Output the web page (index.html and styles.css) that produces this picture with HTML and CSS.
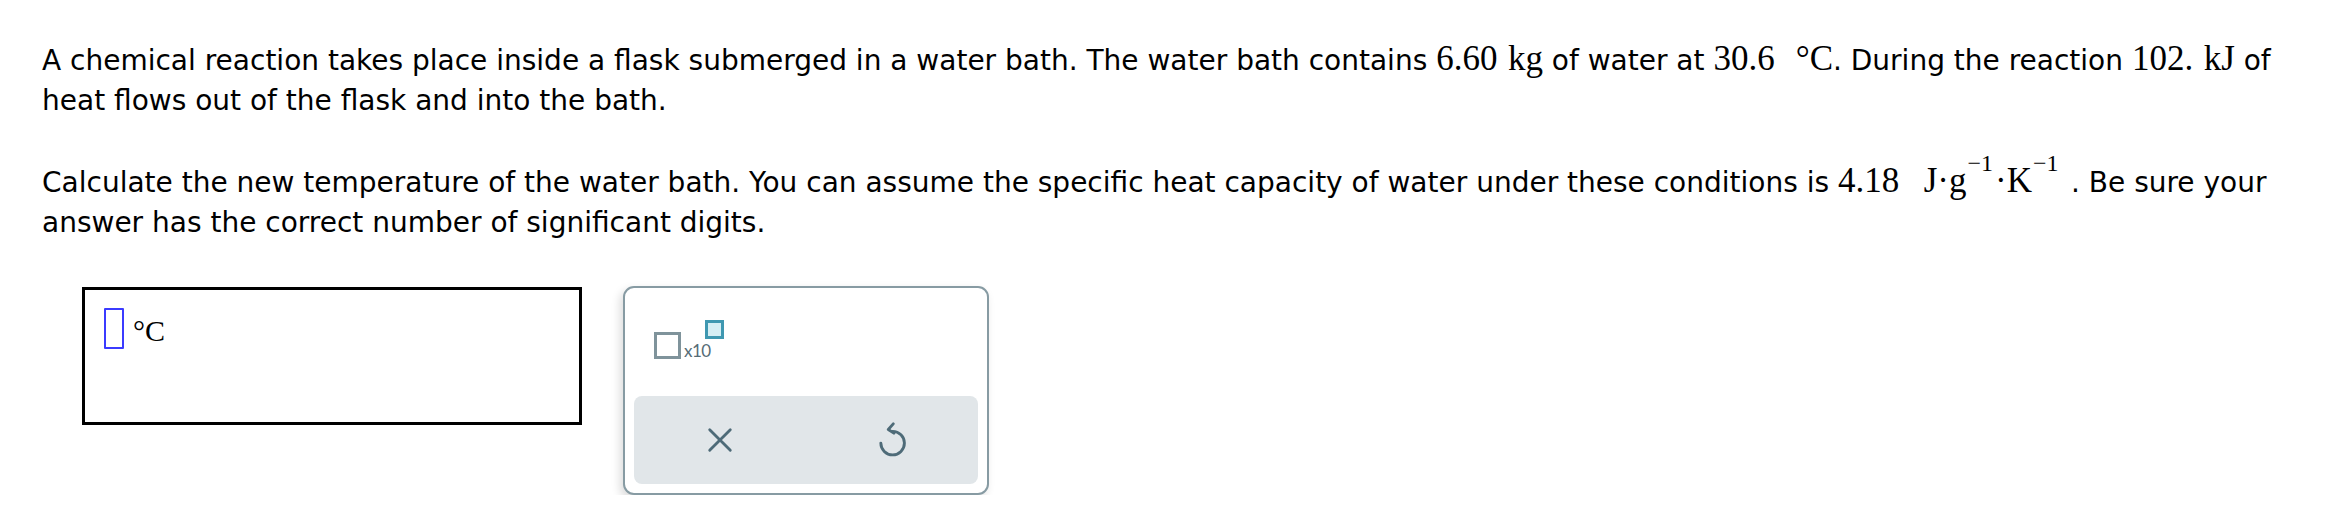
FILE: index.html
```html
<!DOCTYPE html>
<html lang="en">
<head>
<meta charset="utf-8">
<title>Water bath temperature</title>
<link rel="stylesheet" href="styles.css">
</head>
<body>
<div class="question">
  <p class="para">A chemical reaction takes place inside a flask submerged in a water bath. The water bath contains <span class="m">6.60<span class="u">kg</span></span> of water at <span class="m">30.6<span class="u deg">°C</span></span>. During the reaction <span class="m">102.<span class="u">kJ</span></span> of heat flows out of the flask and into the bath.</p>
  <p class="para">Calculate the new temperature of the water bath. You can assume the specific heat capacity of water under these conditions is <span class="m">4.18<span class="u wide">J·g<span class="sup">−1</span>·K<span class="sup">−1</span></span></span>. Be sure your answer has the correct number of significant digits.</p>
</div>
<div class="answer-row">
  <div class="answer-box">
    <span class="slot"></span>
    <span class="unit">°C</span>
  </div>
  <div class="keypad">
    <div class="keys-top">
      <div class="sci">
        <span class="sci-base"></span>
        <span class="sci-x">x10</span>
        <span class="sci-exp"></span>
      </div>
    </div>
    <div class="actions">
      <div class="action">
        <svg width="26" height="26" viewBox="0 0 24 24" fill="none" stroke="#4e6b78" stroke-width="2.6" stroke-linecap="round">
          <path d="M2.5 2.5 L21.5 21.5 M21.5 2.5 L2.5 21.5"/>
        </svg>
      </div>
      <div class="action">
        <svg width="30" height="36" viewBox="0 0 24 29" fill="none" stroke="#4e6b78" stroke-width="2.3" stroke-linecap="round" stroke-linejoin="round">
          <path d="M12.5 7.5 A9.5 9.5 0 1 1 3 17"/>
          <path d="M13 1.5 L9 6 L13.5 9"/>
        </svg>
      </div>
    </div>
  </div>
</div>
</body>
</html>
```
FILE: styles.css
```css
html, body {
  margin: 0;
  padding: 0;
  background: #ffffff;
}
body {
  padding: 41px 20px 0 42px;
  font-family: "DejaVu Sans", Verdana, sans-serif;
  font-size: 28px;
  line-height: 40px;
  color: #000;
}
.para {
  margin: 0;
}
.para + .para {
  margin-top: 42px;
}
.m {
  font-family: "Liberation Serif", "Times New Roman", serif;
  font-size: 35px;
  line-height: 0;
}
.u {
  margin-left: 0.3em;
}
.u.deg {
  margin-left: 0.6em;
}
.u.wide {
  margin-left: 0.7em;
  margin-right: 0.3em;
}
.sup {
  font-size: 24px;
  line-height: 0;
  vertical-align: 21px;
  margin: 0 2px 0 1px;
}
.answer-row {
  display: flex;
  align-items: flex-start;
  margin-top: 44px;
  margin-left: 40px;
}
.answer-box {
  box-sizing: border-box;
  width: 500px;
  height: 138px;
  border: 3px solid #000;
  padding: 18px 0 0 19px;
  display: flex;
  align-items: flex-start;
}
.slot {
  box-sizing: border-box;
  width: 20px;
  height: 41px;
  border: 2px solid #3b3bff;
  border-radius: 1px;
}
.unit {
  font-family: "Liberation Serif", "Times New Roman", serif;
  font-size: 30px;
  line-height: 31px;
  margin: 7px 0 0 9px;
}
.keypad {
  box-sizing: border-box;
  width: 366px;
  height: 209px;
  margin-left: 41px;
  margin-top: -1px;
  border: 2px solid #879ba3;
  border-radius: 11px;
  background: #fff;
  box-shadow: -3px 4px 10px rgba(0, 0, 0, 0.14);
  padding: 9px;
  display: flex;
  flex-direction: column;
}
.keys-top {
  height: 99px;
  padding: 23px 0 0 20px;
  box-sizing: border-box;
}
.sci {
  display: flex;
  align-items: flex-end;
  height: 39px;
}
.sci-base {
  box-sizing: border-box;
  width: 27px;
  height: 27px;
  border: 3px solid #7f939b;
}
.sci-x {
  font-family: Lato, "Open Sans", sans-serif;
  font-size: 17px;
  line-height: 17px;
  color: #566c76;
  margin-left: 3px;
  letter-spacing: -0.5px;
}
.sci-exp {
  align-self: flex-start;
  box-sizing: border-box;
  width: 19px;
  height: 19px;
  border: 3px solid #3f98b1;
  background: #d5eef4;
  margin-left: -6px;
}
.actions {
  flex: 1;
  display: flex;
  background: #e1e6e9;
  border-radius: 8px;
}
.action {
  flex: 1;
  display: flex;
  align-items: center;
  justify-content: center;
}
.action svg {
  display: block;
}
```
